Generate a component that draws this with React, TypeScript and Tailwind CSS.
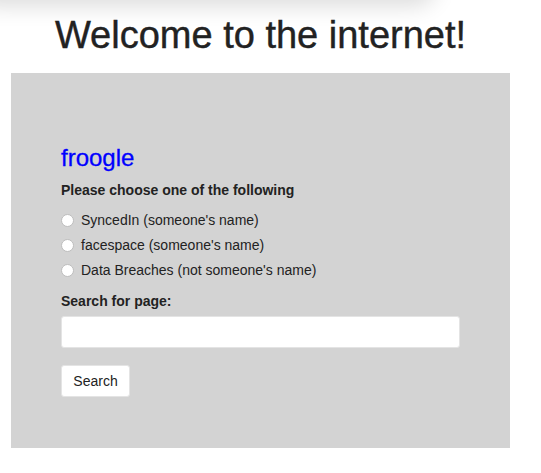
const options = [
  "SyncedIn (someone's name)",
  "facespace (someone's name)",
  "Data Breaches (not someone's name)",
];

export default function App() {
  return (
    <div className="relative min-h-[473px] overflow-hidden bg-white font-['Liberation_Sans',Arial,sans-serif] text-[#222]">
      {/* soft shadow bleeding in from above */}
      <div className="absolute left-[-20px] top-[-30px] h-[30px] w-[450px] rounded-[20px] shadow-[0_0_22px_6px_rgba(0,0,0,0.14)]" />

      <div className="ml-[11px] w-[499px]">
        <h1 className="pt-[16px] text-center text-[38px] leading-[38px] font-normal [-webkit-text-stroke:0.4px_#222]">
          Welcome to the internet!
        </h1>

        <div className="mt-[19px] bg-[#d3d3d3] px-[50px] pt-[73px] pb-[51px]">
          <h2 className="text-[24px] leading-[24px] text-[#0000ff] [-webkit-text-stroke:0.3px_#0000ff]">froogle</h2>

          <p className="mt-[13px] text-[14px] leading-[14px] font-bold">
            Please choose one of the following
          </p>

          <div className="mt-[11px] flex flex-col">
            {options.map((opt) => (
              <label key={opt} className="flex h-[25px] items-center gap-[7px] text-[14px] leading-[25px]">
                <input
                  type="radio"
                  name="site"
                  className="h-[13px] w-[13px] shrink-0 appearance-none rounded-full border border-[#bdbdbd] bg-white"
                />
                <span>{opt}</span>
              </label>
            ))}
          </div>

          <p className="mt-[11px] text-[14px] leading-[14px] font-bold">Search for page:</p>

          <input
            type="text"
            className="mt-[8px] block h-[32px] w-[399px] rounded-[3px] border border-[#e4e4e4] bg-white px-2 text-[14px] outline-none"
          />

          <button className="mt-[17px] h-[32px] w-[69px] rounded-[3px] border border-[#e4e4e4] bg-white text-[14px] text-[#222]">
            Search
          </button>
        </div>
      </div>
    </div>
  );
}
